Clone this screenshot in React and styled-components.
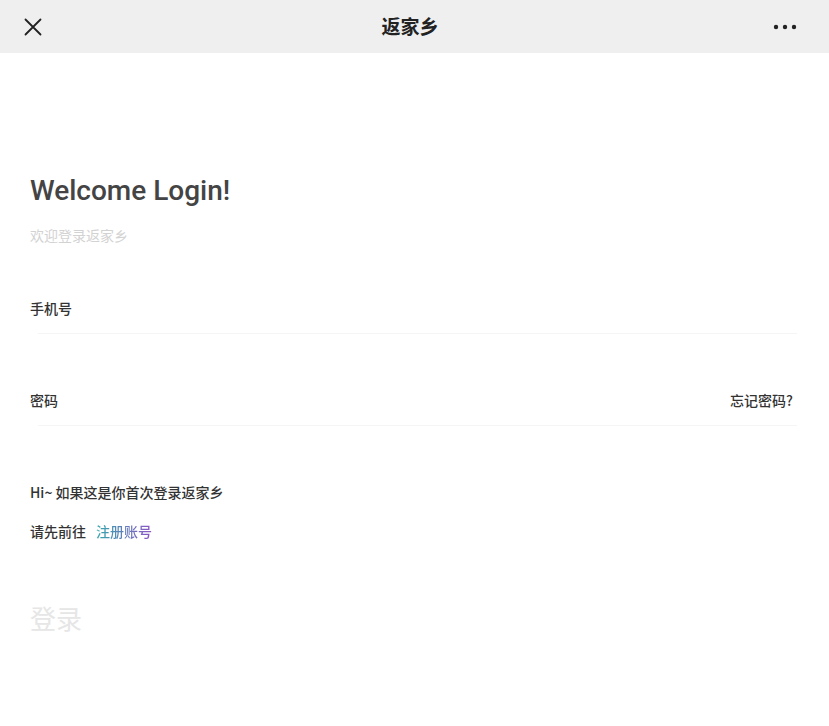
import React from 'react';
import styled, { createGlobalStyle } from 'styled-components';

const GlobalStyle = createGlobalStyle`
  body {
    margin: 0;
    background: #fff;
    font-family: Roboto, "Noto Sans CJK SC", sans-serif;
  }
`;

const Page = styled.div`
  width: 829px;
  min-height: 726px;
  background: #fff;
`;

const NavBar = styled.header`
  height: 53px;
  background: #efefef;
  display: grid;
  grid-template-columns: 80px 1fr 80px;
  align-items: center;
  padding: 0 32px 0 23px;
  box-sizing: border-box;
`;

const NavTitle = styled.h1`
  margin: 0 0 2px;
  text-align: center;
  font-size: 19px;
  font-weight: 700;
  color: #222;
  font-family: "Noto Sans CJK SC", sans-serif;
`;

const NavIcon = styled.div`
  display: flex;
  justify-content: ${(p) => (p.$end ? 'flex-end' : 'flex-start')};
  align-items: center;
  color: #222;
`;

const Body = styled.main`
  padding: 119px 36px 0 30px;
  display: flex;
  flex-direction: column;
`;

const Heading = styled.h2`
  margin: 0;
  font-size: 28px;
  font-weight: 500;
  color: #444;
  line-height: 38px;
`;

const Subtitle = styled.p`
  margin: 15px 0 0;
  font-size: 14px;
  color: #d2d2d2;
  line-height: 20px;
  font-family: "Noto Sans CJK SC", sans-serif;
`;

const Field = styled.div`
  margin-top: ${(p) => p.$top}px;
  display: flex;
  flex-direction: column;
`;

const FieldRow = styled.div`
  display: flex;
  justify-content: space-between;
  align-items: center;
  height: 20px;
`;

const Label = styled.span`
  font-size: 14px;
  font-weight: 500;
  color: #333;
  font-family: "Noto Sans CJK SC", sans-serif;
`;

const Divider = styled.div`
  margin-top: 15px;
  margin-left: 8px;
  margin-right: -4px;
  height: 1px;
  background: #f5f5f5;
`;

const Hint = styled.p`
  margin: ${(p) => p.$top}px 0 0;
  font-size: 14px;
  font-weight: 500;
  color: #333;
  line-height: 20px;
  font-family: "Noto Sans CJK SC", sans-serif;
`;

const RegisterLink = styled.a`
  margin-left: 10px;
  background: linear-gradient(90deg, #34a8ac, #8d55c6);
  -webkit-background-clip: text;
  background-clip: text;
  -webkit-text-fill-color: transparent;
  text-decoration: none;
`;

const LoginButton = styled.button`
  margin-top: 58px;
  align-self: flex-start;
  padding: 0;
  border: none;
  background: none;
  font-size: 26px;
  color: #e6e6e6;
  font-family: "Noto Sans CJK SC", sans-serif;
`;

const CloseIcon = () => (
  <svg width="20" height="20" viewBox="0 0 20 20" fill="none" stroke="currentColor" strokeWidth="1.8" strokeLinecap="round">
    <path d="M2.5 2.5 L17.5 17.5 M17.5 2.5 L2.5 17.5" />
  </svg>
);

const MoreIcon = () => (
  <svg width="24" height="6" viewBox="0 0 24 6" fill="currentColor">
    <circle cx="3" cy="3" r="2.2" />
    <circle cx="12" cy="3" r="2.2" />
    <circle cx="21" cy="3" r="2.2" />
  </svg>
);

export default function App() {
  return (
    <>
      <GlobalStyle />
      <Page>
        <NavBar>
          <NavIcon><CloseIcon /></NavIcon>
          <NavTitle>返家乡</NavTitle>
          <NavIcon $end><MoreIcon /></NavIcon>
        </NavBar>
        <Body>
          <Heading>Welcome Login!</Heading>
          <Subtitle>欢迎登录返家乡</Subtitle>
          <Field $top={53}>
            <FieldRow>
              <Label>手机号</Label>
            </FieldRow>
            <Divider />
          </Field>
          <Field $top={56}>
            <FieldRow>
              <Label>密码</Label>
              <Label>忘记密码?</Label>
            </FieldRow>
            <Divider />
          </Field>
          <Hint $top={56}>Hi~ 如果这是你首次登录返家乡</Hint>
          <Hint $top={19}>
            请先前往<RegisterLink href="#register">注册账号</RegisterLink>
          </Hint>
          <LoginButton>登录</LoginButton>
        </Body>
      </Page>
    </>
  );
}
